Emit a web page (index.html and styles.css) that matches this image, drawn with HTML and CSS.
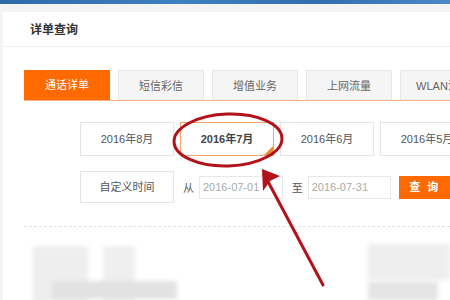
FILE: index.html
```html
<!DOCTYPE html>
<html lang="zh-CN">
<head>
	<meta charset="UTF-8">
	<title>详单查询</title>
	<link rel="stylesheet" href="styles.css">
</head>
<body>
<div class="topbar"></div>
<div class="card">
	<div class="card-head">详单查询</div>

	<!-- 分类标签 -->
	<ul class="tabs">
		<li class="tab active">通话详单</li>
		<li class="tab">短信彩信</li>
		<li class="tab">增值业务</li>
		<li class="tab">上网流量</li>
		<li class="tab">WLAN流量</li>
	</ul>

	<!-- 月份选择 -->
	<div class="months">
		<a class="month" href="javascript:;">2016年8月</a>
		<a class="month current" href="javascript:;">2016年7月</a>
		<a class="month" href="javascript:;">2016年6月</a>
		<a class="month" href="javascript:;">2016年5月</a>
	</div>

	<!-- 自定义时间 -->
	<div class="custom">
		<a class="month" href="javascript:;">自定义时间</a>
		<span class="lbl">从</span>
		<span class="date">2016-07-01</span>
		<span class="lbl">至</span>
		<span class="date">2016-07-31</span>
		<a class="btn" href="javascript:;">查 询</a>
	</div>

	<div class="dots"></div>

	<!-- 下方内容(模糊) -->
	<div class="result">
		<div class="blur-left">
			<div class="blk b1"></div>
			<div class="blk b2"></div>
			<div class="blk b3"></div>
		</div>
		<div class="blur-right">
			<div class="blk b4"></div>
			<div class="blk b5"></div>
		</div>
	</div>
</div>

<!-- 红色标注 -->
<svg class="mark" width="450" height="300" viewBox="0 0 450 300">
	<ellipse cx="228" cy="140" rx="54" ry="26" fill="none" stroke="#b3121a" stroke-width="3" transform="rotate(-2 228 140)"/>
	<line x1="323" y1="285" x2="264" y2="174" stroke="#b3121a" stroke-width="3" stroke-linecap="round"/>
	<path d="M262 169 L263 191 L270 181 L280 176 Z" fill="#b3121a"/>
</svg>
</body>
</html>
```

FILE: styles.css
```css
* {
    margin: 0;
    padding: 0;
}

body {
    width: 450px;
    height: 300px;
    overflow: hidden;
    background-color: #f4f4f4;
    font-family: "Liberation Sans", "Noto Sans CJK SC", sans-serif;
    font-size: 11px;
    color: #555;
}

.topbar {
    height: 4px;
    background: linear-gradient(90deg, #2d6aa8, #3f80c0 40%, #2f6fae 70%, #4a88c6);
}

.card {
    margin: 8px 0 0 3px;
    height: 288px;
    background-color: #fff;
    overflow: hidden;
}

.card-head {
    height: 34px;
    line-height: 36px;
    padding-left: 27px;
    font-size: 12px;
    font-weight: bold;
    color: #333;
    border-bottom: 1px solid #eee;
}

/* 标签 */
.tabs {
    list-style: none;
    display: flex;
    gap: 8px;
    margin: 23px 0 0 21px;
    border-bottom: 1px solid #f6b487;
}

.tab {
    flex: none;
    width: 84px;
    height: 29px;
    line-height: 30px;
    text-align: center;
    background-color: #f5f5f5;
    border: 1px solid #e6e6e6;
    border-bottom: none;
    color: #666;
    white-space: nowrap;
}

.tab.active {
    width: 86px;
    border: none;
    height: 30px;
    background-color: #ff6a00;
    color: #fff;
}

/* 月份 */
.months,
.custom {
    display: flex;
    gap: 6px;
    margin-left: 77px;
}

.months {
    margin-top: 21px;
}

.month {
    flex: none;
    position: relative;
    box-sizing: border-box;
    width: 94px;
    height: 34px;
    line-height: 32px;
    text-align: center;
    border: 1px solid #e5e5e5;
    color: #555;
    text-decoration: none;
    white-space: nowrap;
}

.month.current {
    border-color: #f3a36b;
    font-weight: bold;
    color: #444;
}

.month.current::after {
    content: "";
    position: absolute;
    right: 0;
    bottom: 0;
    border-style: solid;
    border-width: 0 0 9px 9px;
    border-color: transparent transparent #f08a2c transparent;
}

.custom {
    margin-top: 15px;
    align-items: center;
    gap: 0;
}

.custom .month {
    height: 32px;
    line-height: 30px;
}

.lbl {
    margin: 0 5px 0 9px;
    font-family: "Noto Sans CJK SC", sans-serif;
    color: #555;
}

.date {
    box-sizing: border-box;
    width: 86px;
    height: 23px;
    line-height: 21px;
    padding-left: 3px;
    border: 1px solid #e8e8e8;
    color: #aaa;
}

.btn {
    margin-left: 8px;
    width: 52px;
    height: 23px;
    line-height: 23px;
    text-align: center;
    background-color: #ff6a00;
    color: #fff;
    font-weight: bold;
    text-decoration: none;
    letter-spacing: 2px;
}

.dots {
    margin: 23px 0 0 21px;
    border-top: 1px dashed #e2e2e2;
}

/* 模糊的结果 */
.result {
    display: flex;
    justify-content: space-between;
    margin-top: 17px;
}

.blur-left,
.blur-right {
    position: relative;
    height: 60px;
    filter: blur(2px);
}

.blur-left {
    width: 150px;
    margin-left: 30px;
}

.blur-right {
    width: 82px;
}

.blk {
    position: absolute;
    background-color: #ececec;
}

.b1 { left: 0; top: 2px; width: 55px; height: 56px; background-color: #eeeeee; }
.b2 { left: 70px; top: 2px; width: 32px; height: 56px; background-color: #efefef; }
.b3 { left: 19px; top: 37px; width: 125px; height: 18px; background-color: #e2e2e2; }
.b4 { left: 0; top: 0; width: 82px; height: 36px; background-color: #eeeeee; }
.b5 { left: 0; top: 38px; width: 70px; height: 18px; background-color: #e4e4e4; }

.mark {
    position: absolute;
    left: 0;
    top: 0;
}
```
